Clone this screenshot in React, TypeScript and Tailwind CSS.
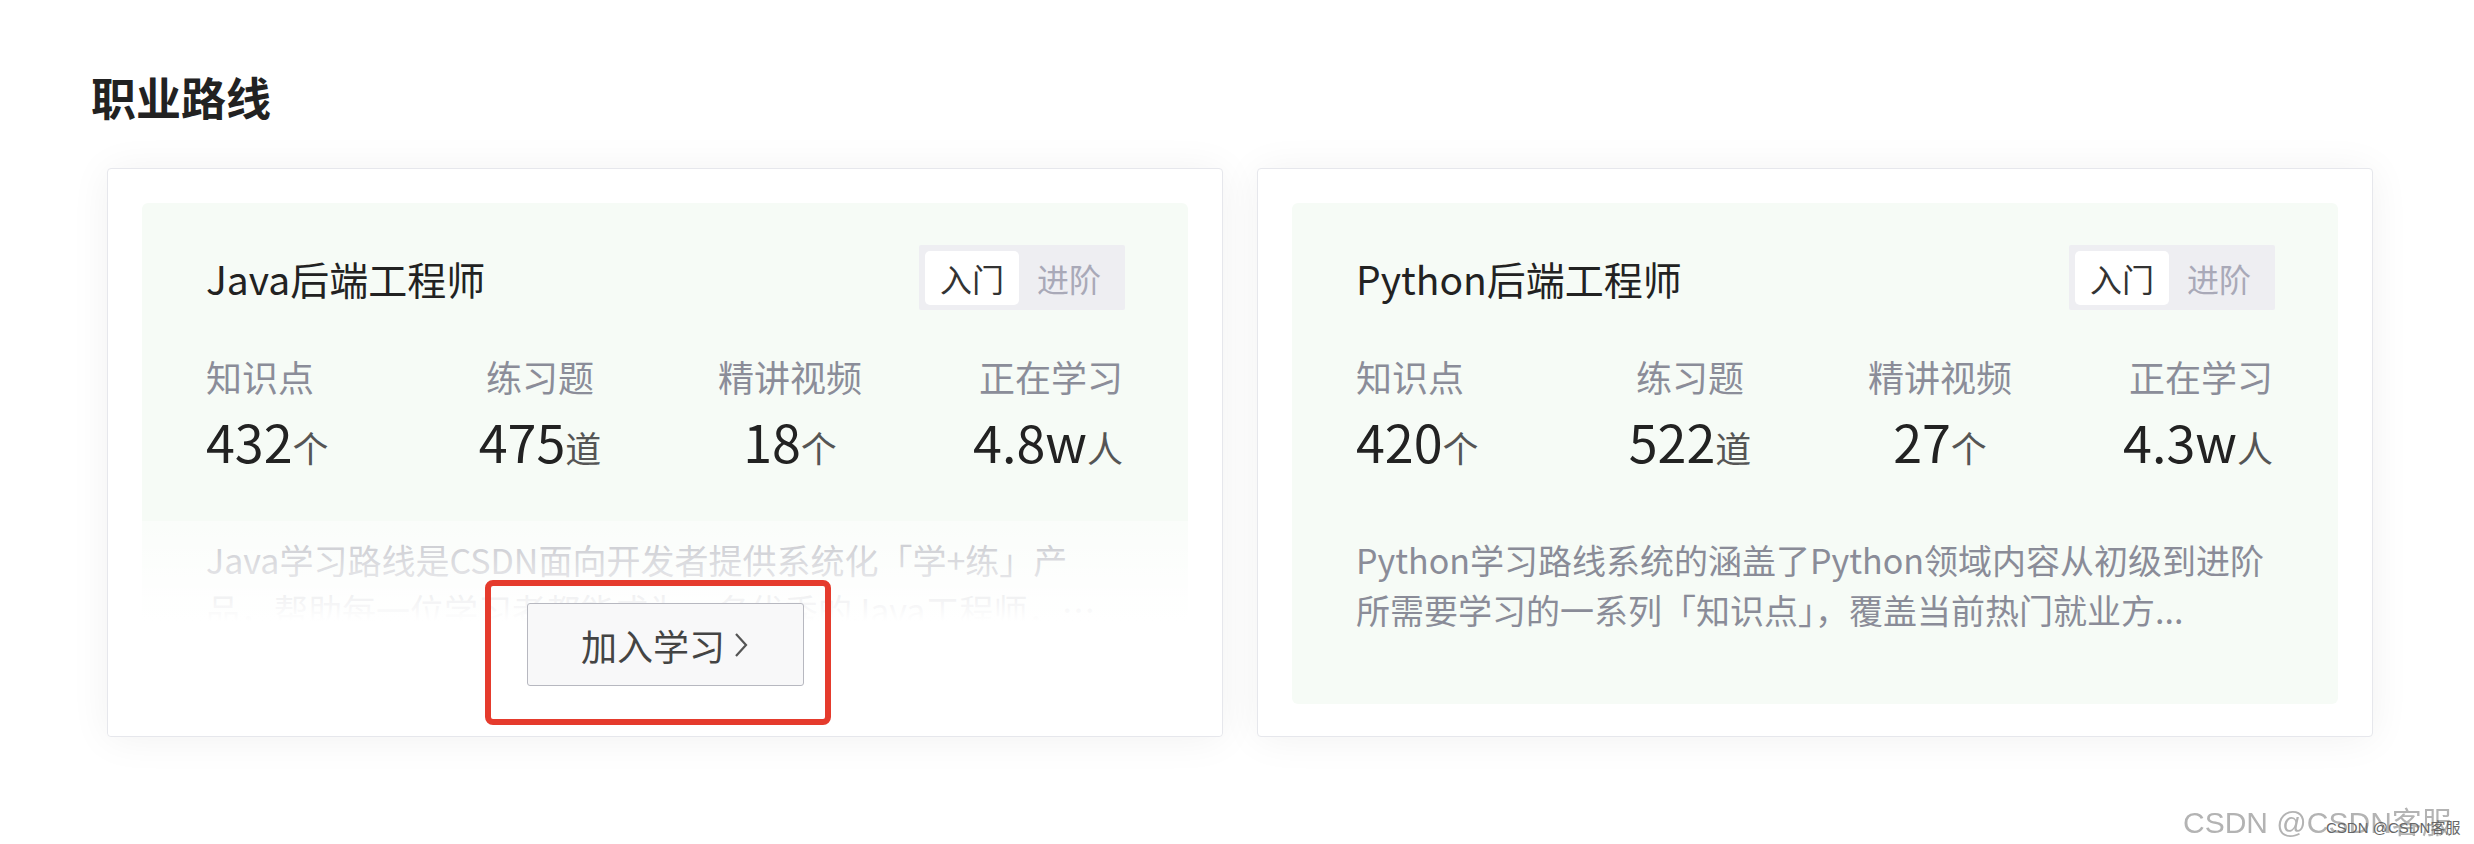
import React from 'react';

interface Stat {
  label: string;
  value: string;
  unit: string;
}

interface Route {
  title: string;
  stats: Stat[];
  desc: string;
  collapsed?: boolean;
}

const routes: Route[] = [
  {
    title: 'Java后端工程师',
    stats: [
      { label: '知识点', value: '432', unit: '个' },
      { label: '练习题', value: '475', unit: '道' },
      { label: '精讲视频', value: '18', unit: '个' },
      { label: '正在学习', value: '4.8w', unit: '人' },
    ],
    desc: 'Java学习路线是CSDN面向开发者提供系统化「学+练」产品，帮助每一位学习者都能成为一名优秀的Java工程师，内容涵盖了Java领域的核心知识点',
    collapsed: true,
  },
  {
    title: 'Python后端工程师',
    stats: [
      { label: '知识点', value: '420', unit: '个' },
      { label: '练习题', value: '522', unit: '道' },
      { label: '精讲视频', value: '27', unit: '个' },
      { label: '正在学习', value: '4.3w', unit: '人' },
    ],
    desc: 'Python学习路线系统的涵盖了Python领域内容从初级到进阶所需要学习的一系列「知识点」，覆盖当前热门就业方...',
  },
];

const LevelToggle = () => (
  <div className="flex items-center h-[65px] px-[6px] bg-[#eeeef2] rounded-[2px]">
    <div className="h-[54px] w-[94px] bg-white rounded-[5px] flex items-center justify-center text-[32px] text-[#333]">入门</div>
    <div className="h-[54px] w-[100px] flex items-center justify-center text-[32px] text-[#a9a9b8]">进阶</div>
  </div>
);

// column alignment: first left, middle two centred, last right
const colAlign = ['items-start', 'items-center', 'items-center', 'items-end'];

const RouteCard = ({ route }: { route: Route }) => (
  <div className="relative w-[1116px] h-[569px] bg-white border border-[#e6e7ec] rounded-[4px] shadow-[0_2px_40px_rgba(0,0,0,0.06)] p-[34px]">
    <div className="h-[501px] bg-[#f6fbf6] rounded-[6px] pl-[64px] pr-[63px] pt-[42px]">
      <div className="flex items-center justify-between">
        <div className="text-[39px] text-[#222] leading-[50px]">{route.title}</div>
        <LevelToggle />
      </div>

      <div className="mt-[42px] grid grid-cols-[208px_252px_248px_209px]">
        {route.stats.map((s, i) => (
          <div key={s.label} className={`flex flex-col ${colAlign[i]}`}>
            <div className="text-[36px] leading-[49px] text-[#8b8d99]">{s.label}</div>
            <div className="mt-[10px] leading-[60px] whitespace-nowrap">
              <span className="text-[52px] text-[#222]">{s.value}</span>
              <span className="text-[36px] text-[#555]">{s.unit}</span>
            </div>
          </div>
        ))}
      </div>

      <p className="mt-[49px] text-[34px] leading-[50px] text-[#8a8c98] line-clamp-2">{route.desc}</p>
    </div>

    {route.collapsed && (
      <>
        <div className="absolute left-0 right-0 bottom-0 top-[352px] bg-[linear-gradient(to_bottom,rgba(255,255,255,0.45)_0px,rgba(255,255,255,0.85)_70px,#ffffff_100px)] flex justify-center rounded-b-[4px]">
          <button className="mt-[82px] w-[277px] h-[83px] bg-[#f8f8f9] border-[1.5px] border-[#b7b8c0] rounded-[3px] flex items-center justify-center gap-[8px] text-[36px] text-[#444]">
            <span>加入学习</span>
            <svg width="16" height="28" viewBox="0 0 16 28" fill="none">
              <polyline points="3,3 13,14 3,25" stroke="#555" strokeWidth="2.2" />
            </svg>
          </button>
        </div>
        <div className="absolute left-[377px] top-[411px] w-[346px] h-[145px] border-[6px] border-[#e53b2d] rounded-[8px]" />
      </>
    )}
  </div>
);

export default function App() {
  return (
    <div className="relative w-[2474px] h-[844px] bg-white overflow-hidden font-['Noto_Sans_CJK_SC',sans-serif]">
      <h2 className="pl-[91px] pt-[70px] text-[45px] leading-[53px] font-bold text-[#222]">职业路线</h2>

      <div className="mt-[45px] pl-[107px] flex gap-[34px]">
        {routes.map((r) => (
          <RouteCard key={r.title} route={r} />
        ))}
      </div>

      <div className="absolute left-[2183px] top-[803px] text-[30px] leading-[40px] whitespace-nowrap text-[#b3b3b3] blur-[0.6px] font-['Liberation_Sans','Noto_Sans_CJK_SC',sans-serif]">
        CSDN @CSDN客服
      </div>
      <div className="absolute left-[2326px] top-[818px] text-[15px] leading-[20px] whitespace-nowrap text-[#666] font-['Liberation_Sans','Noto_Sans_CJK_SC',sans-serif]">
        CSDN @CSDN客服
      </div>
    </div>
  );
}
